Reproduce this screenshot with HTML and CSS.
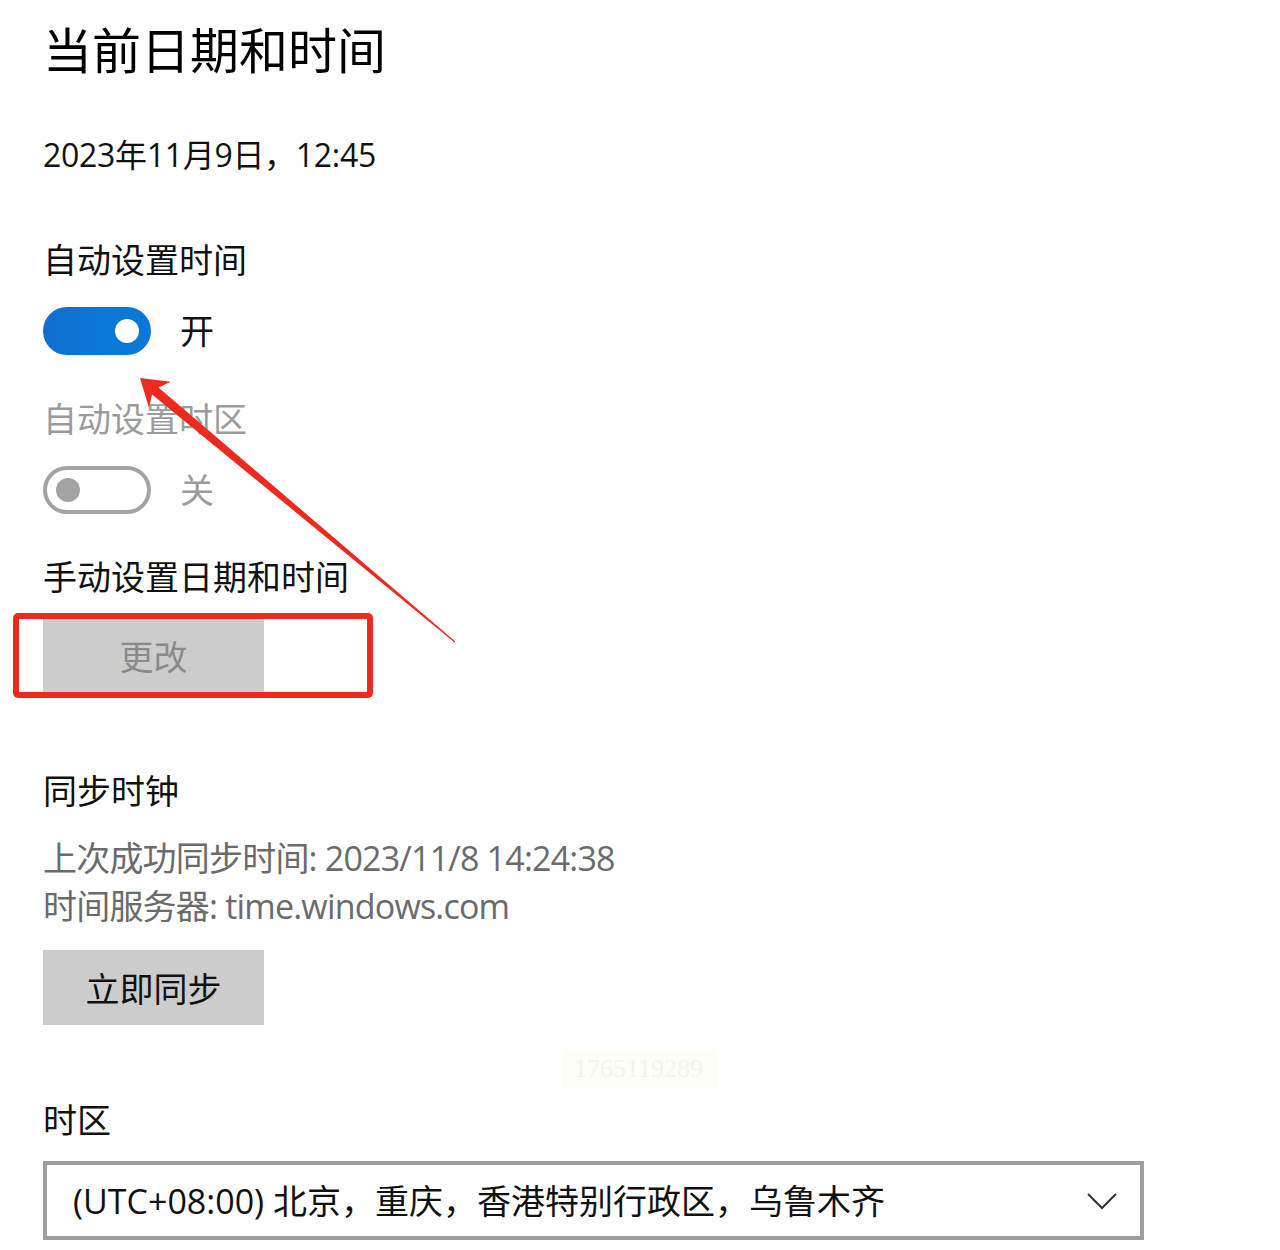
FILE: index.html
```html
<!DOCTYPE html>
<html lang="zh-CN">
<head>
<meta charset="utf-8">
<title>日期和时间</title>
<link rel="stylesheet" href="styles.css">
</head>
<body>
<div class="page">
  <h1 class="title">当前日期和时间</h1>
  <div class="now">2023年11月9日，12:45</div>

  <div class="label l1">自动设置时间</div>
  <div class="toggle-row">
    <span class="toggle on"><span class="knob"></span></span>
    <span class="state">开</span>
  </div>

  <div class="label l2 disabled">自动设置时区</div>
  <div class="toggle-row">
    <span class="toggle off"><span class="knob"></span></span>
    <span class="state disabled">关</span>
  </div>

  <div class="label l3">手动设置日期和时间</div>
  <div class="btn-row">
    <button class="btn btn-disabled">更改</button>
    <span class="highlight"></span>
  </div>

  <div class="label l4">同步时钟</div>
  <div class="sync-info">
    <div>上次成功同步时间: 2023/11/8 14:24:38</div>
    <div>时间服务器: time.windows.com</div>
  </div>
  <button class="btn btn-sync">立即同步</button>

  <div class="label l5">时区</div>
  <div class="select">
    <span class="select-text">(UTC+08:00) 北京，重庆，香港特别行政区，乌鲁木齐</span>
    <svg class="chevron" width="32" height="18" viewBox="0 0 32 18"><path d="M2 2 L16 16 L30 2" fill="none" stroke="#333" stroke-width="2"/></svg>
  </div>

  <div class="watermark">1765119289</div>

  <svg class="arrow" width="1280" height="1250" viewBox="0 0 1280 1250">
    <polygon fill="#ec2a1f" points="140,378 170.8,381.7 158.5,387.5 455.4,641.6 454.6,642.4 152.1,394.6 149,407.7"/>
  </svg>
</div>
</body>
</html>
```

FILE: styles.css
```css
* { box-sizing: border-box; }
html, body { margin: 0; padding: 0; background: #fff; }
body {
  font-family: "Open Sans", "Noto Sans CJK SC", sans-serif;
  color: #111;
}
.page {
  position: relative;
  width: 1280px;
  height: 1250px;
  padding: 22px 0 0 43px;
  overflow: hidden;
}
.title {
  margin: 0;
  font-size: 49px;
  font-weight: 400;
  line-height: 56px;
  color: #000;
}
.now {
  margin-top: 57px;
  font-size: 32px;
  line-height: 40px;
  letter-spacing: -0.3px;
}
.label {
  font-size: 34px;
  line-height: 40px;
  color: #111;
}
.disabled { color: #9b9b9b; }
.l1 { margin-top: 65px; }
.l2 { margin-top: 44px; }
.l3 { margin-top: 43px; }
.l4 { margin-top: 78px; }
.l5 { margin-top: 75px; }

.toggle-row {
  margin-top: 27px;
  display: flex;
  align-items: center;
  gap: 29px;
  height: 48px;
}
.toggle {
  position: relative;
  width: 108px;
  height: 48px;
  border-radius: 24px;
  display: block;
}
.toggle.on {
  background: linear-gradient(90deg, #0e6fd0 0%, #0a78d7 60%, #0a78d7 100%);
}
.toggle.off {
  border: 4px solid #a3a3a3;
  background: #fff;
}
.knob {
  position: absolute;
  top: 50%;
  width: 24px;
  height: 24px;
  margin-top: -12px;
  border-radius: 50%;
}
.on .knob { right: 12px; background: #fff; }
.off .knob { left: 9px; background: #a3a3a3; }
.state {
  font-size: 34px;
  line-height: 40px;
}

.btn-row {
  position: relative;
  margin-top: 21px;
  width: 221px;
  height: 75px;
}
.btn {
  display: block;
  width: 221px;
  height: 75px;
  border: 0;
  padding: 0;
  background: #cccccc;
  font-family: "Open Sans", "Noto Sans CJK SC", sans-serif;
  font-size: 34px;
  color: #111;
}
.btn-disabled { color: #8a8a8a; }
.highlight {
  position: absolute;
  left: -30px;
  top: -5px;
  width: 360px;
  height: 85px;
  border: 6px solid #ec2a1f;
  border-radius: 5px;
}

.sync-info {
  margin-top: 23px;
  font-size: 34px;
  line-height: 48px;
  letter-spacing: -0.8px;
  color: #6b6b6b;
}
.btn-sync { margin-top: 20px; }

.select {
  margin-top: 21px;
  width: 1101px;
  height: 79px;
  border: 4px solid #9e9e9e;
  display: flex;
  align-items: center;
  justify-content: space-between;
  padding: 0 22px 0 26px;
}
.select-text {
  font-size: 34px;
  line-height: 40px;
  color: #111;
}
.chevron { display: block; }

.watermark {
  position: absolute;
  left: 562px;
  top: 1050px;
  width: 156px;
  height: 38px;
  background: #fefef9;
  color: #f4f4ec;
  font-family: "Liberation Serif", serif;
  font-size: 26px;
  line-height: 38px;
  padding-left: 12px;
}
.arrow {
  position: absolute;
  left: 0;
  top: 0;
  pointer-events: none;
}
```
